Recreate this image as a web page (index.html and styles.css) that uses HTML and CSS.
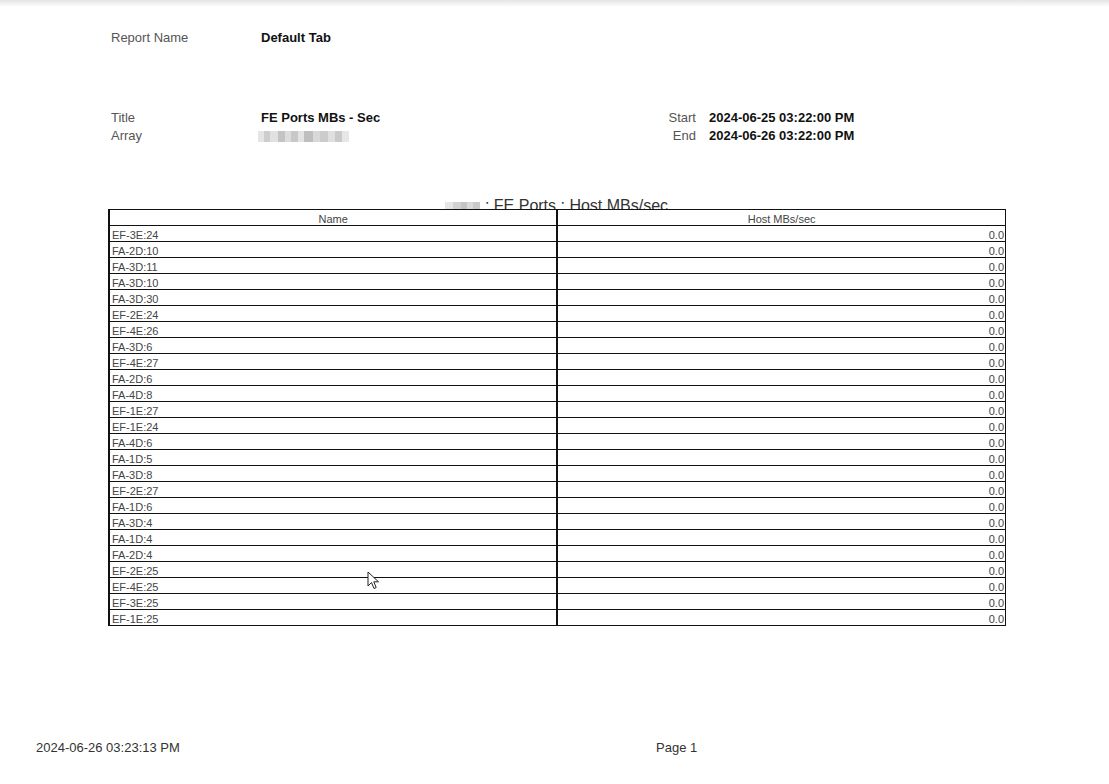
FILE: index.html
```html
<!DOCTYPE html>
<html>
<head>
<meta charset="utf-8">
<link rel="stylesheet" href="styles.css">
</head>
<body>
<div class="page">
  <div class="shade"></div>
  <div class="row-report">
    <span class="label lcol">Report Name</span>
    <span class="value">Default Tab</span>
  </div>
  <div class="meta">
    <div class="meta-left">
      <div class="pair"><span class="label lcol">Title</span><span class="value">FE Ports MBs - Sec</span></div>
      <div class="pair"><span class="label lcol">Array</span><span class="blur blur-array"></span></div>
    </div>
    <div class="meta-right">
      <span class="label rlabel">Start</span><span class="value">2024-06-25 03:22:00 PM</span>
      <span class="label rlabel">End</span><span class="value">2024-06-26 03:22:00 PM</span>
    </div>
  </div>
  <div class="chart-title"><span class="blur blur-title"></span><span class="ct-text">: FE Ports : Host MBs/sec</span></div>
  <table class="grid">
    <thead>
      <tr><th>Name</th><th>Host MBs/sec</th></tr>
    </thead>
    <tbody>
      <tr><td>EF-3E:24</td><td class="num">0.0</td></tr>
      <tr><td>FA-2D:10</td><td class="num">0.0</td></tr>
      <tr><td>FA-3D:11</td><td class="num">0.0</td></tr>
      <tr><td>FA-3D:10</td><td class="num">0.0</td></tr>
      <tr><td>FA-3D:30</td><td class="num">0.0</td></tr>
      <tr><td>EF-2E:24</td><td class="num">0.0</td></tr>
      <tr><td>EF-4E:26</td><td class="num">0.0</td></tr>
      <tr><td>FA-3D:6</td><td class="num">0.0</td></tr>
      <tr><td>EF-4E:27</td><td class="num">0.0</td></tr>
      <tr><td>FA-2D:6</td><td class="num">0.0</td></tr>
      <tr><td>FA-4D:8</td><td class="num">0.0</td></tr>
      <tr><td>EF-1E:27</td><td class="num">0.0</td></tr>
      <tr><td>EF-1E:24</td><td class="num">0.0</td></tr>
      <tr><td>FA-4D:6</td><td class="num">0.0</td></tr>
      <tr><td>FA-1D:5</td><td class="num">0.0</td></tr>
      <tr><td>FA-3D:8</td><td class="num">0.0</td></tr>
      <tr><td>EF-2E:27</td><td class="num">0.0</td></tr>
      <tr><td>FA-1D:6</td><td class="num">0.0</td></tr>
      <tr><td>FA-3D:4</td><td class="num">0.0</td></tr>
      <tr><td>FA-1D:4</td><td class="num">0.0</td></tr>
      <tr><td>FA-2D:4</td><td class="num">0.0</td></tr>
      <tr><td>EF-2E:25</td><td class="num">0.0</td></tr>
      <tr><td>EF-4E:25</td><td class="num">0.0</td></tr>
      <tr><td>EF-3E:25</td><td class="num">0.0</td></tr>
      <tr><td>EF-1E:25</td><td class="num">0.0</td></tr>
    </tbody>
  </table>
  <div class="footer">
    <span class="stamp">2024-06-26 03:23:13 PM</span>
    <span class="pageno">Page 1</span>
  </div>
  <svg class="cursor" width="14" height="20" viewBox="0 0 14 20">
    <path d="M1 1 L1 15 L4.5 11.5 L7 17.5 L9.2 16.5 L6.8 10.8 L11.5 10.8 Z" fill="#fff" stroke="#222" stroke-width="1" stroke-linejoin="round"/>
  </svg>
</div>
</body>
</html>
```

FILE: styles.css
```css
html, body {
  margin: 0;
  padding: 0;
  background: #fff;
}
body {
  font-family: "Liberation Sans", Arial, sans-serif;
  color: #222;
}
.page {
  position: relative;
  width: 1109px;
  height: 784px;
  display: flex;
  flex-direction: column;
  overflow: hidden;
}
.shade {
  height: 7px;
  background: linear-gradient(#e4e4e4, #fff);
}
.label {
  font-size: 13px;
  color: #555;
}
.value {
  font-size: 13px;
  font-weight: bold;
  color: #111;
}
.lcol {
  width: 150px;
  flex: none;
}
.row-report {
  margin-top: 22px;
  padding-left: 111px;
  line-height: 18px;
  height: 18px;
  display: flex;
}
.meta {
  margin-top: 62px;
  padding-left: 111px;
  display: flex;
  line-height: 18px;
}
.meta-left {
  width: 520px;
}
.pair {
  display: flex;
  align-items: center;
  height: 18px;
}
.meta-right {
  display: grid;
  grid-template-columns: 65px auto;
  column-gap: 13px;
}
.rlabel {
  text-align: right;
}
.blur {
  display: inline-block;
}
.blur-array {
  width: 91px;
  height: 11px;
  margin-left: -3px;
  margin-top: 1px;
  background:
    linear-gradient(90deg,
      #e2e2e2 0 6px, #c8c8c8 6px 12px, #dedede 12px 20px, #bdbdbd 20px 27px,
      #d9d9d9 27px 33px, #c2c2c2 33px 40px, #e0e0e0 40px 46px, #b8b8b8 46px 55px,
      #d4d4d4 55px 62px, #c6c6c6 62px 70px, #dcdcdc 70px 77px, #c4c4c4 77px 84px, #e4e4e4 84px 91px);
  opacity: 0.9;
}
.chart-title {
  margin-top: 51px;
  height: 13px;
  overflow: hidden;
  text-align: center;
  font-size: 16px;
  line-height: 18px;
  color: #333;
  padding-left: 4px;
}
.ct-text {
  display: inline-block;
  padding-top: 1px;
}
.blur-title {
  width: 35px;
  height: 11px;
  margin-right: 5px;
  vertical-align: -2px;
  background: linear-gradient(90deg, #e6e6e6 0 8px, #d2d2d2 8px 16px, #c4c4c4 16px 22px, #dadada 22px 28px, #cacaca 28px 35px);
}
.grid {
  margin-left: 108px;
  width: 898px;
  border-collapse: collapse;
  table-layout: fixed;
  font-size: 11px;
  color: #444;
}
.grid th, .grid td {
  border: 1px solid #111;
  height: 12px;
  padding: 3px 2px 0;
  line-height: 12px;
  white-space: nowrap;
}
.grid th {
  font-weight: normal;
  color: #444;
  text-align: center;
}
.grid td:first-child, .grid th:first-child {
  border-right-width: 2px;
}
.grid tr > :first-child {
  border-left-width: 2px;
}
.grid td.num {
  text-align: right;
  padding-right: 1px;
}
.footer {
  margin-top: auto;
  margin-bottom: 27px;
  display: flex;
  line-height: 18px;
  font-size: 13px;
  color: #333;
  padding-left: 36px;
}
.stamp {
  width: 620px;
}
.cursor {
  position: absolute;
  left: 367px;
  top: 571px;
}
```
